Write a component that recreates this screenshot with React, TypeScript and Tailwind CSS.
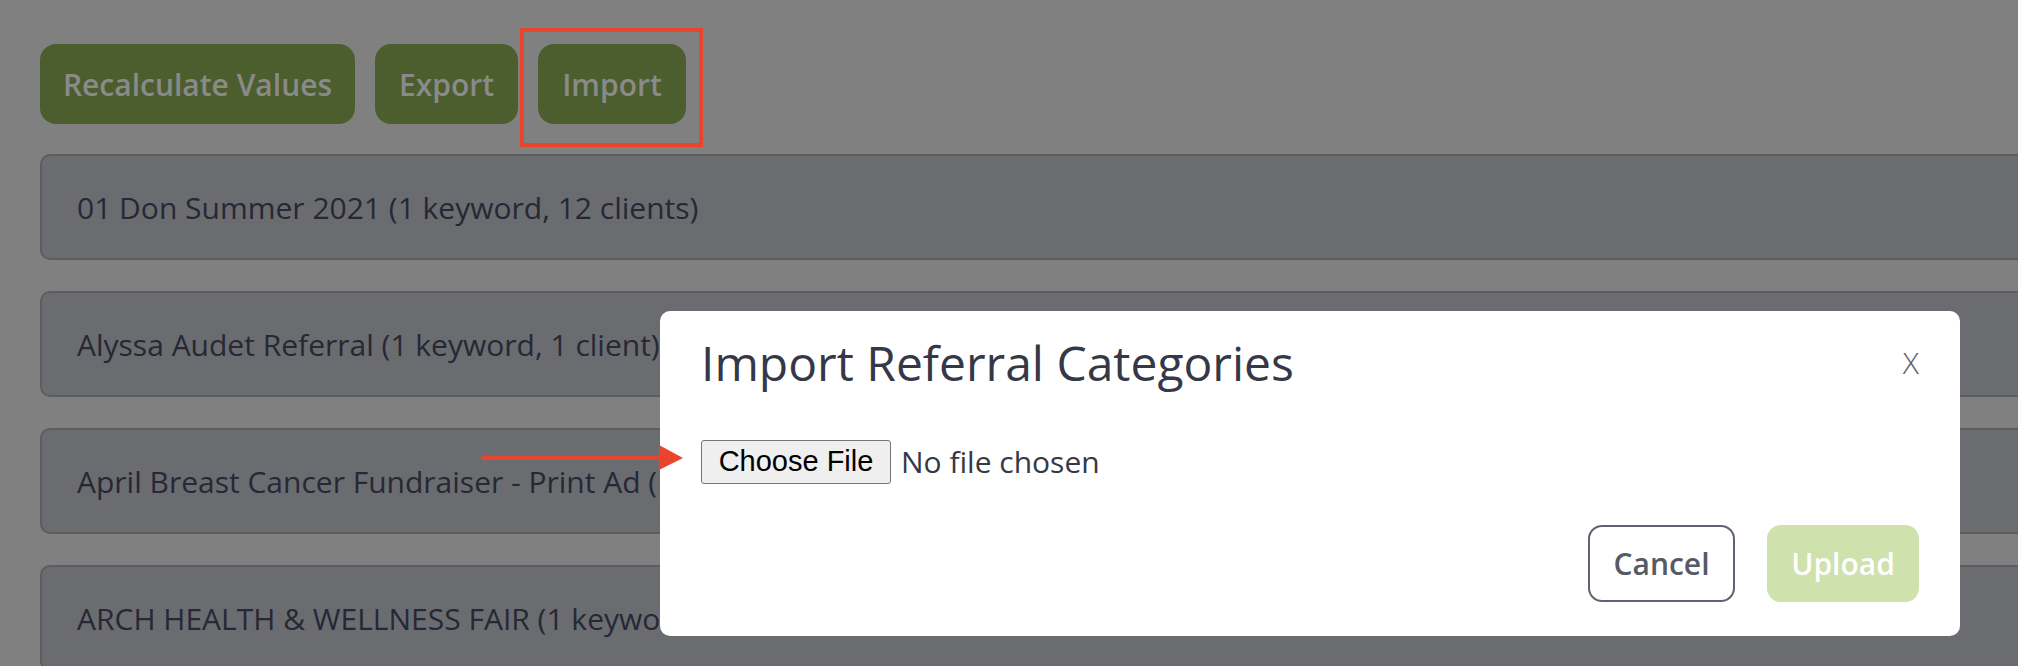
import React from "react";

const rows = [
  "01 Don Summer 2021 (1 keyword, 12 clients)",
  "Alyssa Audet Referral (1 keyword, 1 client)",
  "April Breast Cancer Fundraiser - Print Ad (1 keyword, 1 client)",
  "ARCH HEALTH & WELLNESS FAIR (1 keyword, 1 client)",
];

const sans = "font-['Open_Sans','Noto_Sans',sans-serif]";

export default function App() {
  return (
    <div className={`relative h-[666px] w-full overflow-hidden bg-[#808080] ${sans}`}>
      {/* page behind the overlay */}
      <div className="pl-[40px] pt-[44px]">
        <div className="flex gap-[20px]">
          <button className="h-[80px] w-[315px] rounded-[16px] bg-[#4c5e2e] text-[30px] font-semibold text-[#8a8a8a]">
            Recalculate Values
          </button>
          <button className="h-[80px] w-[143px] rounded-[16px] bg-[#4c5e2e] text-[30px] font-semibold text-[#8a8a8a]">
            Export
          </button>
          <button className="h-[80px] w-[148px] rounded-[16px] bg-[#4c5e2e] text-[30px] font-semibold text-[#8a8a8a]">
            Import
          </button>
        </div>

        <div className="mt-[30px] -mr-[40px] flex flex-col gap-[31px]">
          {rows.map((r) => (
            <div
              key={r}
              className="flex h-[106px] items-center rounded-[10px] border-2 border-[#5c5d61] bg-[#6b6c6f] pl-[35px] text-[30px] text-[#262836] whitespace-nowrap"
            >
              {r}
            </div>
          ))}
        </div>
      </div>

      {/* annotation: box round Import */}
      <div className="absolute left-[520px] top-[28px] h-[119px] w-[183px] border-4 border-[#e8452c]" />

      {/* modal */}
      <div className="absolute left-[660px] top-[311px] flex h-[325px] w-[1300px] flex-col rounded-[10px] bg-white px-[41px] pb-[34px] pt-[23px]">
        <div className="flex items-center justify-between">
          <h2 className="text-[48px] leading-[58px] text-[#353846]">Import Referral Categories</h2>
          <span className="text-[30px] font-light leading-none text-[#5b5e6b]">X</span>
        </div>

        <div className="mt-[47px] flex items-center gap-[10px]">
          <span className="flex h-[44px] w-[190px] items-center justify-center rounded-[3px] border border-[#767676] bg-[#efefef] font-['Liberation_Sans',Arial,sans-serif] text-[29px] text-black">
            Choose File
          </span>
          <span className="text-[30px] text-[#353846]">No file chosen</span>
        </div>

        <div className="mt-auto flex justify-end gap-[32px]">
          <button className="h-[77px] w-[147px] rounded-[14px] border-2 border-[#5f6370] text-[30px] font-semibold text-[#555a66]">
            Cancel
          </button>
          <button className="h-[77px] w-[152px] rounded-[14px] bg-[#cfe1ad] text-[30px] font-semibold text-white">
            Upload
          </button>
        </div>
      </div>

      {/* annotation: arrow to file input, drawn over the modal */}
      <svg className="absolute left-[478px] top-[443px]" width="206" height="28" viewBox="0 0 206 28">
        <line x1="3" y1="15" x2="184" y2="15" stroke="#e8452c" strokeWidth="4" />
        <polygon points="181,2 205,15 181,27" fill="#e8452c" />
      </svg>
    </div>
  );
}
